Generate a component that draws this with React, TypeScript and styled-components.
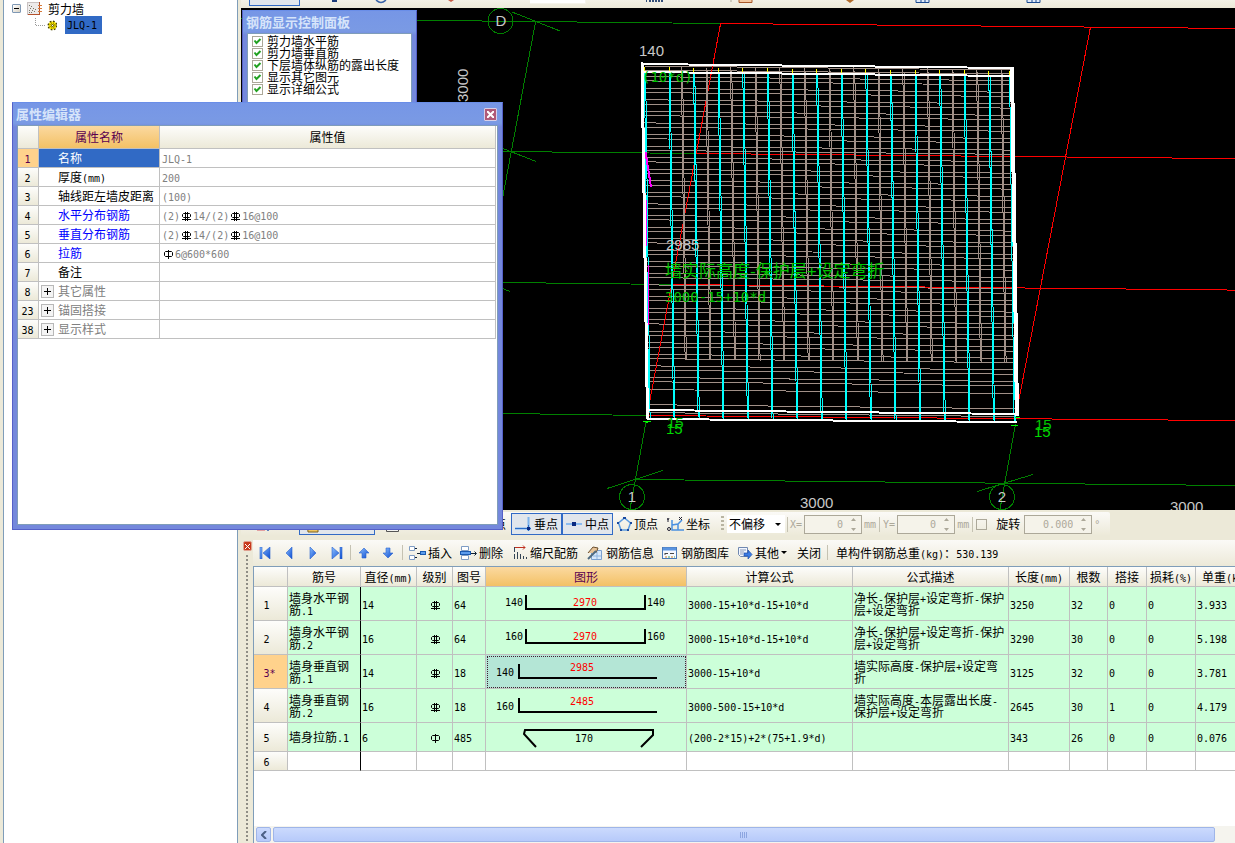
import React from "react";
import styled, { createGlobalStyle, css } from "styled-components";

const GlobalStyle = createGlobalStyle`
  * { box-sizing: border-box; }
  body {
    margin: 0;
    background: #ece9d8;
    color: #000;
    font-family: "Noto Sans CJK SC", sans-serif;
    font-size: 12px;
    line-height: 12px;
  }
  button, input, select { font: inherit; color: inherit; margin: 0; padding: 0; }
`;

/* ---------- text ---------- */

const Half = styled.span`
  font-family: "DejaVu Sans Mono", monospace;
  font-size: 10px;
  line-height: 1px;
`;

/* Sets the half-width runs of a label in the narrow fixed-pitch face. */
function Label({ children }: { children: string }) {
  return (
    <>
      {children.split(/([\x21-\x7e]+)/).map((run, i) =>
        i % 2 ? <Half key={i}>{run}</Half> : run
      )}
    </>
  );
}

/* ---------- shell ---------- */

const Shell = styled.div`
  position: relative;
  display: flex;
  min-height: 100vh;
  overflow: hidden;
`;

const TreePanel = styled.aside`
  flex: 0 0 235px;
  margin-left: 3px;
  padding: 1px 8px;
  background: #fff;
  border: solid #7f9db9;
  border-width: 0 1px;
`;

const TreeRow = styled.div<{ $child?: boolean }>`
  display: flex;
  align-items: center;
  height: 15px;
  gap: 6px;
  ${(p) =>
    p.$child &&
    css`
      height: 18px;
      padding-left: 23px;
      gap: 0;
    `}
`;

const TreeToggle = styled.button`
  display: grid;
  place-items: center;
  width: 9px;
  height: 9px;
  border: 1px solid #7f98b4;
  border-radius: 1px;
  background: linear-gradient(135deg, #fff, #d8d2c4);
`;

const Selected = styled.a`
  margin-left: 8px;
  padding: 2px 5px 2px 2px;
  background: #316ac5;
  color: #000;
  text-decoration: none;
`;

const SelectedText = styled.span`
  font-family: "DejaVu Sans Mono", monospace;
  font-size: 10px;
`;

const Main = styled.main`
  flex: 1;
  min-width: 0;
  display: flex;
  flex-direction: column;
  padding-left: 3px;
`;

/* ---------- top tool strip ---------- */

const Strip = styled.div`
  display: flex;
  align-items: flex-start;
  height: 8px;
  overflow: hidden;
  background: linear-gradient(#f3f1e6, #ece9d8);
`;

const StripItem = styled.span<{ $before: number }>`
  display: block;
  flex: none;
  margin-left: ${(p) => p.$before}px;
  height: 8px;
  svg { display: block; }
`;

const StripButton = styled.button`
  flex: none;
  margin-left: 8px;
  width: 51px;
  height: 6px;
  border: solid #316ac5;
  border-width: 0 1px 1px;
  background: #e1e6ec;
`;

const StripField = styled.span`
  flex: none;
  margin-left: 76px;
  width: 56px;
  height: 4px;
  background: #fff;
  border: solid #f5f3ea;
  border-width: 0 1px 1px 0;
`;

/* ---------- drawing area ---------- */

const Drawing = styled.svg`
  display: block;
  flex: none;
  width: 100%;
  height: 502px;
  background: #000;
  font-family: "Liberation Sans", "Noto Sans CJK SC", sans-serif;
  font-size: 15px;
`;

const Formula = styled.text`
  font-family: "DejaVu Sans Mono", monospace;
  font-size: 14px;
`;

const range = (n: number) => Array.from({ length: n }, (_, i) => i);

function Seg({ p, c, w = 1 }: { p: number[]; c: string; w?: number }) {
  return <line x1={p[0]} y1={p[1]} x2={p[2]} y2={p[3]} stroke={c} strokeWidth={w} />;
}

const GREEN = "#008000";
const RED = "#f00";
const STEEL = "#a09088";
const CYAN = "#0ff";

const greenAxes = [
  [241, 18.5, 720, 23.5],
  [535.5, 22, 497, 228],
  [512, 12, 560, 31],
  [503, 151.5, 697, 153.5],
  [503, 148.5, 536, 161.5],
  [503, 282.5, 672, 284.5],
  [500, 287.5, 510, 291.5],
  [503, 413.5, 648, 415.5],
  [646, 422, 630, 509],
  [607, 488.5, 663, 470.5],
  [634, 479.5, 1235, 485.5],
  [1235, 485.5, 2435, 497.5],
  [1015.5, 424, 1000, 509],
  [977, 491.5, 1033, 474.5],
];
const redAxes = [
  [720, 23.5, 2435, 40],
  [697, 153.5, 2435, 170],
  [672, 284.5, 2435, 302],
  [648, 415.5, 2435, 431],
  [720.5, 24, 649, 405],
  [1090.5, 27, 1016, 415],
];

function Model() {
  return (
    <Drawing role="img" aria-label="剪力墙钢筋三维">
      <g transform="translate(-241 -8)">
        <g shapeRendering="crispEdges" fill="none">
          {greenAxes.map((p, i) => <Seg key={i} p={p} c={GREEN} />)}
          <circle cx="500.5" cy="21" r="12.5" stroke={GREEN} />
          <circle cx="632" cy="497" r="12.5" stroke={GREEN} />
          <circle cx="1002" cy="497" r="12.5" stroke={GREEN} />

          {range(27).map((k) => {
            const y = 76.6 + k * 11.57;
            return (
              <g key={k}>
                <Seg p={[644 + k / 9, y, 1011 + k / 7, y + 4.1]} c={STEEL} />
                <Seg p={[644 + k / 9, y + 4.3, 1011 + k / 7, y + 8.4]} c={STEEL} />
              </g>
            );
          })}
          {[66, 70, 389.5, 404.7, 412.6].map((y) => (
            <Seg key={y} p={[y > 100 ? 648 : 644, y, y > 100 ? 1015 : 1011, y + 4]} c={STEEL} />
          ))}
          {redAxes.map((p, i) => <Seg key={i} p={p} c={RED} />)}
          {range(14).map((i) => {
            const x = 681.4 + i * 24.6;
            const y = 66 + i * 0.2;
            return (
              <g key={i}>
                <Seg p={[x, y, x + 3.7, y + 293]} c={STEEL} />
                <Seg p={[x + 1.25, y + 4, x + 4.9, y + 294]} c={STEEL} />
              </g>
            );
          })}
          {range(16).map((i) => {
            const x = Math.min(644.4 + i * 24.6, 1009.6);
            const y = 67 + i * 0.25;
            return (
              <g key={i}>
                <Seg p={[x, y + 4, x + 4.5, y + 350]} c={CYAN} />
                <Seg p={[x + 1.25, y + 6, x + 5.7, y + 352]} c={CYAN} />
                <Seg p={[x, y, x, y + 5]} c="#ff0" />
              </g>
            );
          })}

          <Seg p={[645.5, 152, 651, 187]} c="#f0f" w={2} />
          <Seg p={[646.5, 200, 647, 246]} c="#f0f" />
          <Seg p={[648.5, 265, 649, 325]} c="#f0f" />

          <Seg p={[642, 64, 1013, 68]} c="#fff" w={2} />
          <Seg p={[642, 72, 1013, 76]} c="#fff" w={2} />
          <Seg p={[642, 62, 647.5, 419]} c="#fff" w={3} />
          <Seg p={[1012, 67, 1017, 416]} c="#fff" w={4} />
          <Seg p={[648, 410, 1017, 414]} c="#fff" w={2} />
          <Seg p={[647, 419, 1017, 422]} c="#fff" w={2} />
          <Seg p={[643, 421.5, 651, 421.5]} c="#0f0" />
          <Seg p={[646, 422.5, 648, 422.5]} c="#0f0" />
          <Seg p={[1011, 425.5, 1018, 425.5]} c="#0f0" />
          <Seg p={[1015, 417.5, 1020, 417.5]} c="#0f0" />
        </g>

        <g fill="#c8c8c8">
          <text x="501" y="26" textAnchor="middle">D</text>
          <text x="632" y="502" textAnchor="middle">1</text>
          <text x="1002" y="502" textAnchor="middle">2</text>
          <text x="639" y="56">140</text>
          <text x="666" y="250">2985</text>
          <text x="800" y="508">3000</text>
          <text x="1170" y="512">3000</text>
          <text transform="translate(468 102) rotate(-90)">3000</text>
        </g>
        <g fill="#00c400">
          <Formula x="642" y="82">(10*d)</Formula>
          <text x="665" y="277" fontSize="17">墙实际高度-保护层+设定弯折</text>
          <Formula x="665" y="302">3000-15+10*d</Formula>
          <text x="667" y="428">15</text>
          <text x="1035" y="430">15</text>
        </g>
        <g fill="#00d800">
          <text x="666" y="434">15</text>
          <text x="1034" y="437">15</text>
        </g>
      </g>
    </Drawing>
  );
}

/* ---------- tool bars ---------- */

const SnapRow = styled.div`
  display: flex;
  height: 30px;
  padding-top: 2px;
  background: #ece9d8;
`;

const SnapBar = styled.div`
  display: flex;
  align-items: center;
  flex: none;
  height: 24px;
  padding-right: 10px;
  background: linear-gradient(#fbfaf7, #ece9d8);
  border-radius: 2px;
`;

const HiddenSide = styled.div`
  display: flex;
  align-items: center;
  width: 249px;
  gap: 11px;
  padding-left: 13px;
`;

const PressedTool = styled.button`
  width: 76px;
  height: 22px;
  margin-left: 18px;
  padding-left: 6px;
  border: 1px solid #316ac5;
  background: #e1e6ec;
  text-align: left;
  svg { display: block; }
`;

const ToolButton = styled.button<{ $on?: boolean; $w?: number }>`
  display: flex;
  align-items: center;
  flex: none;
  gap: 2px;
  height: 22px;
  width: ${(p) => (p.$w ? p.$w + "px" : "auto")};
  padding: 0 3px;
  border: 1px solid ${(p) => (p.$on ? "#316ac5" : "transparent")};
  background: ${(p) => (p.$on ? "#e1e6ec" : "none")};
  white-space: nowrap;
  svg { flex: none; }
`;

const Grip = styled.span`
  flex: none;
  width: 3px;
  height: 16px;
  margin: 0 3px 0 6px;
  background: repeating-linear-gradient(#b8b4a2 0 2px, transparent 2px 4px);
`;

const Divider = styled.span<{ $m?: number }>`
  flex: none;
  width: 1px;
  height: 15px;
  margin: 0 ${(p) => p.$m ?? 2}px;
  background: #c5c2b2;
`;

const SelectWrap = styled.label`
  position: relative;
  flex: none;
  display: block;
  svg { position: absolute; right: 4px; top: 8px; pointer-events: none; }
`;

const OffsetSelect = styled.select`
  display: block;
  width: 58px;
  height: 18px;
  padding-left: 2px;
  border: 0;
  appearance: none;
  background: #fff;
`;

const Spin = styled.label<{ $w: number }>`
  display: flex;
  align-items: center;
  flex: none;
  gap: 2px;
  color: #aca899;
  input {
    width: ${(p) => p.$w}px;
    height: 19px;
    padding-right: 18px;
    border: 1px solid #aca899;
    background: #f5f3ea;
    color: #aca899;
    text-align: right;
    font-family: "DejaVu Sans Mono", monospace;
    font-size: 10px;
  }
  svg { margin: 0 5px 0 -14px; }
`;

const RotateCheck = styled.label`
  display: flex;
  align-items: center;
  flex: none;
  gap: 9px;
  margin-right: 4px;
  input {
    appearance: none;
    width: 11px;
    height: 11px;
    border: 1px solid #aca899;
  }
`;

const SpinArrows = () => (
  <svg width="7" height="15" fill="#aca899" aria-hidden>
    <path d="M1 4L3.500 1L6 4zM1 11L3.500 14L6 11z" />
  </svg>
);

/* ---------- dock ---------- */

const Dock = styled.section`
  flex: 1;
  display: flex;
  min-width: 0;
`;

const DockEdge = styled.div`
  display: flex;
  flex-direction: column;
  align-items: center;
  flex: 0 0 12px;
  gap: 4px;
  padding-top: 1px;
`;

const DockClose = styled.button`
  display: grid;
  place-items: center;
  width: 9px;
  height: 10px;
  border: 1px solid #e0a090;
  border-radius: 2px;
  background: #c8391b;
`;

const DockHandle = styled.div`
  flex: 1;
  width: 2px;
  background: repeating-linear-gradient(#8f8d85 0 2px, transparent 2px 4px);
`;

const DockBody = styled.div`
  flex: 1;
  min-width: 0;
  display: flex;
  flex-direction: column;
`;

const DockBar = styled.div`
  display: flex;
  align-items: center;
  height: 26px;
  padding: 0 0 1px;
  background: linear-gradient(#fbfaf7, #ece9d8);
  white-space: nowrap;
`;

const NavButton = styled.button`
  display: grid;
  place-items: center;
  flex: none;
  width: 24px;
  height: 22px;
  border: 0;
  background: none;
`;

const GridFrame = styled.div`
  flex: 1;
  display: flex;
  flex-direction: column;
  justify-content: space-between;
  min-width: 0;
  overflow: hidden;
  background: #fff;
  border: solid #7f9db9;
  border-width: 1px 0 0 1px;
`;

const headFill = css`
  background: linear-gradient(#fdfdfb, #ece9d8);
  font-weight: normal;
`;

const hotFill = css`
  background: linear-gradient(#fbd9a0, #f3c165);
  color: #5a0050;
`;

const Grid = styled.table`
  width: 1003px;
  table-layout: fixed;
  border-collapse: separate;
  border-spacing: 0;
`;

const ColHead = styled.th<{ $hot?: boolean }>`
  ${headFill}
  height: 20px;
  padding: 0;
  border: solid #c0c0c0;
  border-width: 0 1px 1px 0;
  white-space: nowrap;
  ${(p) => p.$hot && hotFill}
`;

const RowHead = styled.th<{ $hot?: boolean }>`
  ${headFill}
  padding: 0 8px 0 0;
  border: solid #c0c0c0;
  border-width: 0 1px 1px 0;
  ${(p) => p.$hot && css`background: #ffd28c; color: #5a0050; padding-right: 2px;`}
`;

const Cell = styled.td<{ $fill?: boolean; $dark?: boolean; $center?: boolean }>`
  padding: 0 0 0 1px;
  border: solid #c0c0c0;
  border-width: 0 1px 1px 0;
  background: ${(p) => (p.$fill ? "#ccffd9" : "#fff")};
  text-align: ${(p) => (p.$center ? "center" : "left")};
  svg { vertical-align: middle; }
  ${(p) => p.$dark && css`border-right-color: #000;`}
`;

const ShapeCell = styled(Cell)<{ $active?: boolean }>`
  padding: 0;
  svg { display: block; }
  ${(p) => p.$active && css`background: #b4e6d6; outline: 1px dotted #402030; outline-offset: -2px;`}
`;

const ShapeArt = styled.svg`
  font-family: "DejaVu Sans Mono", monospace;
  font-size: 10px;
`;

const ScrollRow = styled.div`
  display: flex;
  gap: 2px;
  height: 17px;
  padding: 1px 20px 1px 2px;
  background: #f5f4ee;
`;

const ScrollButton = styled.button<{ $thumb?: boolean }>`
  display: grid;
  place-items: center;
  flex: ${(p) => (p.$thumb ? "1" : "0 0 15px")};
  border: 1px solid #9fb5e8;
  border-radius: 2px;
  background: linear-gradient(#cbdafd, #b7cafa);
`;

/* Reinforcement grade marks: a crossed bar, and the double-ruled one. */
function Grade({ level }: { level: 1 | 3 }) {
  return (
    <svg width="11" height="9" viewBox="0 0 11 9" fill="none" stroke="#000" role="img" aria-label={`${level}级钢`}>
      {level === 1 ? (
        <path d="M5.500 0V9M2.500 1.500H8.500L9.500 2.500V5.500L8.500 6.500H2.500L1.500 5.500V2.500Z" />
      ) : (
        <path d="M4.500 0V9M6.500 0V9M2.500 1.500H8.500L9.500 2.500V4.500L8.500 5.500H2.500L1.500 4.500V2.500ZM1 7.500H10" />
      )}
    </svg>
  );
}

type Bar = { kind: "u" | "l" | "tie"; side: string; len: string };

function BarShape({ kind, side, len }: Bar) {
  const h = kind === "tie" ? 28 : 33;
  return (
    <ShapeArt width="200" height={h} aria-label={`${side} ${len}`}>
      <g fill="none" stroke="#000" strokeWidth="2">
        {kind === "u" && <path d="M40 8V22H159V8" />}
        {kind === "l" && <path d="M33 9V23H171" />}
        {kind === "tie" && <path d="M50 24L38 11L39 7H167V12L155 24" />}
      </g>
      {kind === "u" && (
        <>
          <text x="19" y="19">{side}</text>
          <text x="161" y="19">{side}</text>
          <text x="99" y="19" textAnchor="middle" fill="#f00">{len}</text>
        </>
      )}
      {kind === "l" && (
        <>
          <text x="10" y="21">{side}</text>
          <text x="96" y="16" textAnchor="middle" fill="#f00">{len}</text>
        </>
      )}
      {kind === "tie" && <text x="98" y="19" textAnchor="middle">{len}</text>}
    </ShapeArt>
  );
}

const columns = [
  { t: "", w: 34 }, { t: "筋号", w: 73 }, { t: "直径(mm)", w: 56 }, { t: "级别", w: 36 },
  { t: "图号", w: 33 }, { t: "图形", w: 201 }, { t: "计算公式", w: 166 }, { t: "公式描述", w: 156 },
  { t: "长度(mm)", w: 61 }, { t: "根数", w: 38 }, { t: "搭接", w: 39 }, { t: "损耗(%)", w: 49 }, { t: "单重(kg)", w: 61 },
];

type Row = { n: string; name: string; dia: string; level: 1 | 3; fig: string; bar: Bar; calc: string; desc: string; rest: string[]; hot?: boolean };
const rows: Row[] = [
  { n: "1", name: "墙身水平钢筋.1", dia: "14", level: 3, fig: "64", bar: { kind: "u", side: "140", len: "2970" }, calc: "3000-15+10*d-15+10*d", desc: "净长-保护层+设定弯折-保护层+设定弯折", rest: ["3250", "32", "0", "0", "3.933"] },
  { n: "2", name: "墙身水平钢筋.2", dia: "16", level: 3, fig: "64", bar: { kind: "u", side: "160", len: "2970" }, calc: "3000-15+10*d-15+10*d", desc: "净长-保护层+设定弯折-保护层+设定弯折", rest: ["3290", "30", "0", "0", "5.198"] },
  { n: "3*", name: "墙身垂直钢筋.1", dia: "14", level: 3, fig: "18", bar: { kind: "l", side: "140", len: "2985" }, calc: "3000-15+10*d", desc: "墙实际高度-保护层+设定弯折", rest: ["3125", "32", "0", "0", "3.781"], hot: true },
  { n: "4", name: "墙身垂直钢筋.2", dia: "16", level: 3, fig: "18", bar: { kind: "l", side: "160", len: "2485" }, calc: "3000-500-15+10*d", desc: "墙实际高度-本层露出长度-保护层+设定弯折", rest: ["2645", "30", "1", "0", "4.179"] },
  { n: "5", name: "墙身拉筋.1", dia: "6", level: 1, fig: "485", bar: { kind: "tie", side: "", len: "170" }, calc: "(200-2*15)+2*(75+1.9*d)", desc: "", rest: ["343", "26", "0", "0", "0.076"] },
];

const GridRow = styled.tr<{ $h: number }>`
  height: ${(p) => p.$h}px;
`;

function RebarTable() {
  return (
    <Grid>
      <colgroup>{columns.map((c, i) => <col key={i} width={c.w} />)}</colgroup>
      <thead>
        <tr>
          {columns.map((c, i) => <ColHead key={i} $hot={i === 5}><Label>{c.t}</Label></ColHead>)}
        </tr>
      </thead>
      <tbody>
        {rows.map((r) => (
          <GridRow key={r.n} $h={r.level === 1 ? 29 : 34}>
            <RowHead $hot={r.hot}><Label>{r.n}</Label></RowHead>
            <Cell $fill $dark><Label>{r.name}</Label></Cell>
            <Cell $fill><Label>{r.dia}</Label></Cell>
            <Cell $fill $center><Grade level={r.level} /></Cell>
            <Cell $fill><Label>{r.fig}</Label></Cell>
            <ShapeCell $fill $active={r.hot}><BarShape {...r.bar} /></ShapeCell>
            <Cell $fill><Label>{r.calc}</Label></Cell>
            <Cell $fill><Label>{r.desc}</Label></Cell>
            {r.rest.map((v, i) => <Cell key={i} $fill><Label>{v}</Label></Cell>)}
          </GridRow>
        ))}
        <GridRow $h={19}>
          <RowHead><Label>6</Label></RowHead>
          {columns.slice(1).map((_, i) => <Cell key={i} $dark={i === 0} />)}
        </GridRow>
      </tbody>
    </Grid>
  );
}

/* ---------- floating windows ---------- */

const FloatWindow = styled.section<{ $x: number; $y: number; $w: number; $h: number }>`
  position: absolute;
  left: ${(p) => p.$x}px;
  top: ${(p) => p.$y}px;
  width: ${(p) => p.$w}px;
  height: ${(p) => p.$h}px;
  display: flex;
  flex-direction: column;
  padding: 0 4px 4px;
  border: 1px solid #5560c8;
  border-top-color: #6a8ee8;
  background: linear-gradient(#7696e6, #7a9ae4 20px, #7488dc 24px);
`;

const TitleBar = styled.header`
  display: flex;
  align-items: center;
  justify-content: space-between;
  height: 22px;
  flex: none;
`;

const Title = styled.h2`
  margin: 0 0 0 -1px;
  color: #d6e4fa;
  font-size: 13px;
  line-height: 16px;
  font-weight: bold;
`;

const CloseBox = styled.button`
  display: grid;
  place-items: center;
  width: 13px;
  height: 13px;
  margin-right: 1px;
  border: 1px solid #d8d0e8;
  border-radius: 1px;
  background: #b05a78;
`;

const WindowBody = styled.div`
  flex: 1;
  min-height: 0;
  background: #fff;
  border: 1px solid #7f9db9;
`;

const CheckList = styled.div`
  display: flex;
  flex-direction: column;
  padding: 1px 4px;
  label {
    display: flex;
    align-items: center;
    gap: 4px;
    height: 12px;
    white-space: nowrap;
  }
`;

const Check = styled.span`
  display: grid;
  flex: none;
  input, svg { grid-area: 1 / 1; }
  input {
    appearance: none;
    width: 11px;
    height: 11px;
    border: 1px solid #aca899;
    background: #fff;
  }
  svg { pointer-events: none; }
`;

const Props = styled.table`
  width: 478px;
  table-layout: fixed;
  border-collapse: separate;
  border-spacing: 0;
`;

const PropHead = styled(ColHead)`
  height: 23px;
`;

const PropIndex = styled(RowHead)`
  padding: 0 1px 0 0;
`;

const PropName = styled.td<{ $tone?: string; $selected?: boolean; $group?: boolean }>`
  height: 19px;
  padding: 0 0 0 ${(p) => (p.$group ? 2 : 19)}px;
  border: solid #c0c0c0;
  border-width: 0 1px 1px 0;
  color: ${(p) => (p.$selected ? "#fff" : p.$tone ?? "#000")};
  background: ${(p) => (p.$selected ? "#316ac5" : "#fff")};
  white-space: nowrap;
`;

const GroupLine = styled.div`
  display: flex;
  align-items: center;
  gap: 4px;
`;

const PlusBox = styled.button`
  display: grid;
  place-items: center;
  width: 13px;
  height: 13px;
  border: 1px solid #b8b8b8;
  background: #f4f4f4;
`;

const PropValue = styled.td`
  padding: 0 0 0 2px;
  border: solid #c0c0c0;
  border-width: 0 1px 1px 0;
  color: #808080;
  svg { vertical-align: middle; margin: 0 1px; }
`;

const blue = "#0000ff";
const gray = "#808080";
type Prop = { n: string; name: string; tone?: string; group?: boolean; value?: (string | 1 | 3)[] };
const props: Prop[] = [
  { n: "1", name: "名称", value: ["JLQ-1"] },
  { n: "2", name: "厚度(mm)", value: ["200"] },
  { n: "3", name: "轴线距左墙皮距离", value: ["(100)"] },
  { n: "4", name: "水平分布钢筋", tone: blue, value: ["(2)", 3, "14/(2)", 3, "16@100"] },
  { n: "5", name: "垂直分布钢筋", tone: blue, value: ["(2)", 3, "14/(2)", 3, "16@100"] },
  { n: "6", name: "拉筋", tone: blue, value: [1, "6@600*600"] },
  { n: "7", name: "备注" },
  { n: "8", name: "其它属性", tone: gray, group: true },
  { n: "23", name: "锚固搭接", tone: gray, group: true },
  { n: "38", name: "显示样式", tone: gray, group: true },
];

function PropertyEditor() {
  return (
    <FloatWindow $x={12} $y={102} $w={491} $h={428}>
      <TitleBar>
        <Title>属性编辑器</Title>
        <CloseBox aria-label="关闭属性编辑器">
          <svg width="7" height="7" stroke="#fff" strokeWidth="2"><path d="M0 0L7 7M7 0L0 7" /></svg>
        </CloseBox>
      </TitleBar>
      <WindowBody>
        <Props>
          <colgroup><col width={21} /><col width={121} /><col /></colgroup>
          <thead>
            <tr><PropHead /><PropHead $hot>属性名称</PropHead><PropHead>属性值</PropHead></tr>
          </thead>
          <tbody>
            {props.map((p, i) => (
              <tr key={p.n}>
                <PropIndex $hot={i === 0}><Label>{p.n}</Label></PropIndex>
                <PropName $tone={p.tone} $selected={i === 0} $group={p.group}>
                  {p.group ? (
                    <GroupLine>
                      <PlusBox aria-label={`展开${p.name}`}>
                        <svg width="7" height="7" stroke="#000" shapeRendering="crispEdges"><path d="M0 3.500H7M3.500 0V7" /></svg>
                      </PlusBox>
                      {p.name}
                    </GroupLine>
                  ) : (
                    <Label>{p.name}</Label>
                  )}
                </PropName>
                <PropValue>
                  {p.value?.map((v, k) => (typeof v === "string" ? <Label key={k}>{v}</Label> : <Grade key={k} level={v} />))}
                </PropValue>
              </tr>
            ))}
          </tbody>
        </Props>
      </WindowBody>
    </FloatWindow>
  );
}

const toggles = ["剪力墙水平筋", "剪力墙垂直筋", "下层墙体纵筋的露出长度", "显示其它图元", "显示详细公式"];

function DisplayPanel() {
  return (
    <FloatWindow $x={242} $y={10} $w={175} $h={120}>
      <TitleBar><Title>钢筋显示控制面板</Title></TitleBar>
      <WindowBody>
        <CheckList>
          {toggles.map((t) => (
            <label key={t}>
              <Check>
                <input type="checkbox" defaultChecked />
                <svg width="11" height="11" fill="none" stroke="#21a121" strokeWidth="2"><path d="M2.500 4.500L4.500 7L8.500 3" /></svg>
              </Check>
              {t}
            </label>
          ))}
        </CheckList>
      </WindowBody>
    </FloatWindow>
  );
}

/* ---------- icons ---------- */

const FolderIcon = () => (
  <svg width="15" height="14" viewBox="0 0 15 14">
    <rect x=".5" y=".5" width="12" height="12" fill="#eceaea" stroke="#c9c2c2" />
    <path d="M12.500 0V13M1 12.500H13" stroke="#b5522d" fill="none" />
    <path d="M11 3.500H15M11 6.500H15M11 9.500H15" stroke="#d87a3a" />
    <path d="M2 8h1v1H2zM4 10h1v1H4zM3 6h1v1H3zM5 8h1v1H5zM7 9h1v1H7zM2 10h1v1H2zM6 6h1v1H6zM4 4h1v1H4zM8 7h1v1H8zM2 3h1v1H2z" fill="#776" />
  </svg>
);

const GearIcon = () => (
  <svg width="22" height="15" viewBox="0 0 22 15">
    <path d="M.5 0V7.500H11" stroke="#999" strokeDasharray="1 1" fill="none" />
    <circle cx="17.500" cy="7.500" r="4" fill="#ffec00" stroke="#4a4400" strokeDasharray="1.600 1.540" strokeWidth="2" />
    <circle cx="17.500" cy="7.500" r="3.500" fill="#ffec00" />
    <circle cx="17.500" cy="7.500" r="2.500" fill="none" stroke="#4a4400" strokeDasharray="1 1" />
    <circle cx="17.500" cy="7.500" r="1" fill="#fff" stroke="#4a4400" />
  </svg>
);

const Blues = () => (
  <defs>
    <linearGradient id="navBlue" x1="0" y1="0" x2="1" y2="1">
      <stop offset="0" stopColor="#8cc0ff" /><stop offset="1" stopColor="#0a4ad0" />
    </linearGradient>
  </defs>
);

function NavIcon({ d }: { d: string }) {
  return (
    <svg width="12" height="12" viewBox="0 0 12 12">
      <Blues /><path d={d} fill="url(#navBlue)" stroke="#2a62cc" strokeWidth=".6" />
    </svg>
  );
}

const Perp = () => (
  <svg width="17" height="16" fill="none"><path d="M0 12.500H16M13.500 1V15" stroke="#7db4ee" strokeWidth="2" /><path d="M0 12.500H16M13.500 9V15" stroke="#2a6cc8" /><rect x="12" y="11" width="3" height="3" fill="#0a2a80" /></svg>
);
const Mid = () => (
  <svg width="17" height="16"><path d="M0 8H16" stroke="#8cbcf0" strokeWidth="2" /><rect x="6" y="6" width="4" height="4" fill="#0a2a80" /></svg>
);
const Pentagon = () => (
  <svg width="15" height="16" fill="none"><path d="M7.500 2L13.500 7L11 14H4L1.500 7Z" stroke="#5a9ae0" strokeWidth="1.500" /><path d="M6 1h3v2H6zM0 6h2v2H0zM13 6h2v2h-2zM3 13h2v2H3zM10 13h2v2h-2z" fill="#1a4aa0" /></svg>
);
const Coord = () => (
  <svg width="17" height="16" fill="none"><path d="M5 4V14H17M5 9L11 8L15 4M11 8V14" stroke="#4a90e0" strokeWidth="1.500" /><path d="M0 2l1 2 1-2M1 4v2M12 1l3 3M15 1l-3 3" stroke="#223" /><circle cx="2" cy="13" r="1.500" stroke="#223" /></svg>
);
const InsertIcon = () => (
  <svg width="17" height="16" fill="#fff" stroke="#7e9cc4"><path d="M.5 1.500H5.500V5.500H.5zM.5 10.500H5.500V14.500H.5z" /><path d="M6 3.500H8M6 12.500H8M8 8.500H11" stroke="#123" /><rect x="11.500" y="6.500" width="5" height="3" fill="#5c9cec" stroke="#1a5ab0" /></svg>
);
const DeleteIcon = () => (
  <svg width="17" height="16" fill="#fff" stroke="#7e9cc4"><path d="M1.500 1.500H8.500V5.500H1.500zM1.500 10.500H8.500V14.500H1.500z" /><rect x=".5" y="6.500" width="10" height="3" fill="#5c9cec" stroke="#1a5ab0" /><path d="M11 8.500H16M14.500 6.500L16.500 8.500L14.500 10.500" stroke="#123" fill="none" /></svg>
);
const ScaleIcon = () => (
  <svg width="15" height="16" fill="none"><path d="M2 2.500H12M10 0.500L12 2.500L10 4.500" stroke="#c03020" /><path d="M1.500 2V7M1.500 9V14M4.500 7V14M7.500 9V14M10.500 11V14M13.500 12V14" stroke="#345" /></svg>
);
const InfoIcon = () => (
  <svg width="17" height="16" fill="none"><path d="M4.500 5.500H14.500V14.500H4.500z" fill="#d8e8fa" stroke="#7aa0d0" /><path d="M1 8L6 2L11 3L9 8" fill="#e8c498" stroke="#6a5030" /><path d="M1 14L9 6" stroke="#506a80" strokeWidth="2" /><path d="M10 7V14M6 11H14" stroke="#8eb4e0" /></svg>
);
const LibraryIcon = () => (
  <svg width="17" height="16" fill="none"><rect x=".5" y="2.500" width="14" height="11" fill="#f5f8ff" stroke="#4a7ab8" /><path d="M1 4H14" stroke="#5a94e0" strokeWidth="3" /><path d="M3 8.500H6M8 8.500H12M3 10V8" stroke="#444" /><path d="M3 12h2M9 12h2" stroke="#d08020" /><path d="M6 12h2M12 12h1" stroke="#40a060" /></svg>
);
const OtherIcon = () => (
  <svg width="16" height="16" fill="none"><path d="M1.500 2.500H10.500V11.500H3.500L1.500 9.500z" fill="#f2f6ff" stroke="#7088b0" /><path d="M3 5H9M3 7H7M3 9H6" stroke="#8898b8" /><path d="M7 8H11V5L15 9.500L11 14V11H7z" fill="#3c7ce4" stroke="#1a4aa8" strokeWidth=".7" /></svg>
);
const EraserIcon = () => (
  <svg width="16" height="20"><path d="M3 4h8v13H3z" fill="#e4a0a0" /><path d="M13 6h2v11h-2z" fill="#6080c0" /></svg>
);
const HandIcon = () => (
  <svg width="13" height="20"><path d="M1 6h11v12H2z" fill="#f0c860" stroke="#7a6020" /></svg>
);
const RectIcon = () => (
  <svg width="13" height="20"><path d="M.5 6.500h12v11H.5z" fill="#f4f4f0" stroke="#555" /></svg>
);
const Caret = () => <svg width="6" height="3"><path d="M0 0H6L3 3z" /></svg>;

const ActionText = styled.span`
  padding-left: 6px;
`;

export default function App() {
  return (
    <>
      <GlobalStyle />
      <Shell>
        <TreePanel>
          <TreeRow>
            <TreeToggle aria-label="折叠"><svg width="5" height="1"><path d="M0 .5H5" stroke="#000" /></svg></TreeToggle>
            <FolderIcon />
            剪力墙
          </TreeRow>
          <TreeRow $child>
            <GearIcon />
            <Selected href="#JLQ-1"><SelectedText>JLQ-1</SelectedText></Selected>
          </TreeRow>
        </TreePanel>

        <Main>
          <Strip>
            <StripButton aria-label="视图" />
            <StripItem $before={31}><svg width="7" height="8"><path d="M1 0H6V2H1z" fill="#1c3c78" /></svg></StripItem>
            <StripItem $before={37}><svg width="12" height="8"><circle cx="6" cy="-3" r="5.500" fill="none" stroke="#3a64a8" strokeWidth="1.500" /></svg></StripItem>
            <StripItem $before={61}><svg width="6" height="8"><path d="M0 0H6L3 2z" fill="#c65a43" /></svg></StripItem>
            <StripField />
            <StripItem $before={60}><svg width="18" height="8"><path d="M0 0V2M3 1H18" stroke="#344f78" strokeWidth="2" strokeDasharray="2 1" /></svg></StripItem>
            <StripItem $before={66}><svg width="24" height="8"><path d="M1 0V2" stroke="#aca899" /><path d="M9 0V2.500H22V0" fill="#f4c8a0" stroke="#a85828" /></svg></StripItem>
            <StripItem $before={92}><svg width="8" height="8"><path d="M0 0H8L4 3z" fill="#b06a28" /></svg></StripItem>
            <StripItem $before={60}><svg width="16" height="8"><path d="M2 0V2.500H15V0M7 0V2M11 0V2" fill="#dfeaf8" stroke="#1a4a90" /></svg></StripItem>
            <StripItem $before={95}><svg width="16" height="8"><path d="M2 0V2.500H15V0M7 0V2M11 0V2" fill="#dfeaf8" stroke="#1a4a90" /></svg></StripItem>
          </Strip>

          <Model />

          <SnapRow>
            <SnapBar>
              <HiddenSide>
                <EraserIcon />
                <PressedTool aria-label="选择"><HandIcon /></PressedTool>
                <RectIcon />
              </HiddenSide>
              <ToolButton $w={21}>点</ToolButton>
              <ToolButton $on $w={51}><Perp />垂点</ToolButton>
              <ToolButton $on $w={51}><Mid />中点</ToolButton>
              <ToolButton $w={50}><Pentagon />顶点</ToolButton>
              <ToolButton $w={52}><Coord />坐标</ToolButton>
              <Grip />
              <SelectWrap>
                <OffsetSelect aria-label="偏移方式"><option>不偏移</option></OffsetSelect>
                <Caret />
              </SelectWrap>
              <Divider $m={2} />
              <Spin $w={58}><Half>X=</Half><input disabled defaultValue="0" /><SpinArrows /><Half>mm</Half></Spin>
              <Divider $m={3} />
              <Spin $w={58}><Half>Y=</Half><input disabled defaultValue="0" /><SpinArrows /><Half>mm</Half></Spin>
              <Divider $m={3} />
              <RotateCheck><input type="checkbox" />旋转</RotateCheck>
              <Spin $w={68}><input aria-label="旋转角度" disabled defaultValue="0.000" /><SpinArrows /><Half>°</Half></Spin>
            </SnapBar>
          </SnapRow>

          <Dock>
            <DockEdge>
              <DockClose aria-label="关闭面板"><svg width="5" height="5" stroke="#fff"><path d="M0 0L5 5M5 0L0 5" /></svg></DockClose>
              <DockHandle />
            </DockEdge>
            <DockBody>
              <DockBar>
                <NavButton aria-label="首条"><NavIcon d="M1 0H3V12H1zM11 0V12L4 6z" /></NavButton>
                <NavButton aria-label="上一条"><NavIcon d="M9 0V12L3 6z" /></NavButton>
                <NavButton aria-label="下一条"><NavIcon d="M3 0V12L9 6z" /></NavButton>
                <NavButton aria-label="末条"><NavIcon d="M9 0H11V12H9zM1 0V12L8 6z" /></NavButton>
                <Divider $m={1} />
                <NavButton aria-label="上移"><NavIcon d="M6 1L11 6H8V11H4V6H1z" /></NavButton>
                <NavButton aria-label="下移"><NavIcon d="M6 11L11 6H8V1H4V6H1z" /></NavButton>
                <Divider $m={2} />
                <ToolButton $w={51}><InsertIcon />插入</ToolButton>
                <ToolButton $w={53}><DeleteIcon />删除</ToolButton>
                <ToolButton $w={74}><ScaleIcon />缩尺配筋</ToolButton>
                <ToolButton $w={75}><InfoIcon />钢筋信息</ToolButton>
                <ToolButton $w={75}><LibraryIcon />钢筋图库</ToolButton>
                <ToolButton $w={60}><OtherIcon />其他<Caret /></ToolButton>
                <ToolButton $w={32}>关闭</ToolButton>
                <Divider />
                <ActionText><Label>单构件钢筋总重(kg)：530.139</Label></ActionText>
              </DockBar>
              <GridFrame>
                <RebarTable />
                <ScrollRow>
                  <ScrollButton aria-label="向左滚动">
                    <svg width="6" height="8" fill="none" stroke="#4d6185" strokeWidth="2"><path d="M5 0L1 4L5 8" /></svg>
                  </ScrollButton>
                  <ScrollButton $thumb aria-label="水平滚动条">
                    <svg width="8" height="6" stroke="#8ca5e0"><path d="M.5 0V6M2.500 0V6M4.500 0V6M6.500 0V6" /></svg>
                  </ScrollButton>
                </ScrollRow>
              </GridFrame>
            </DockBody>
          </Dock>
        </Main>

        <DisplayPanel />
        <PropertyEditor />
      </Shell>
    </>
  );
}
